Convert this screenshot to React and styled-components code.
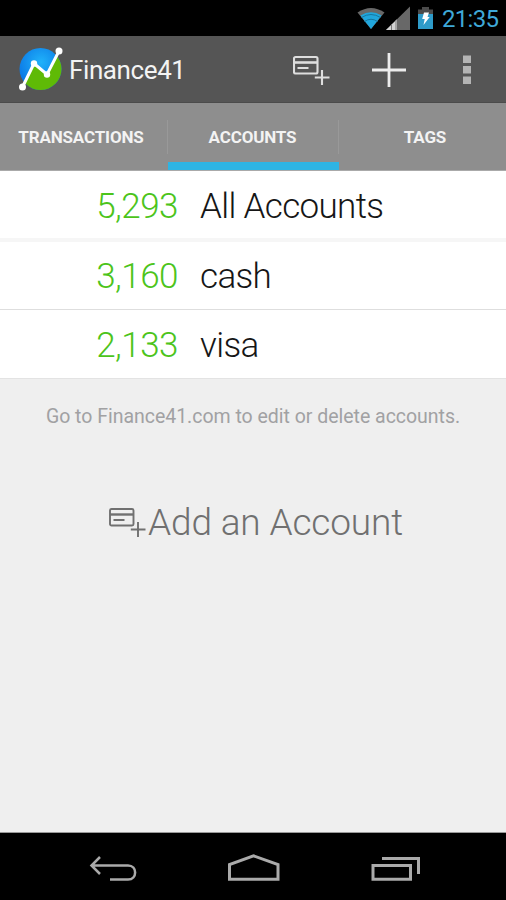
import React from "react";
import styled, { createGlobalStyle } from "styled-components";

const GlobalStyle = createGlobalStyle`
  body { margin: 0; background: #000; }
  * { box-sizing: border-box; }
`;

const Screen = styled.div`
  width: 506px;
  height: 900px;
  display: flex;
  flex-direction: column;
  overflow: hidden;
  background: #efefef;
  font-family: Roboto, "Liberation Sans", sans-serif;
`;

const StatusBar = styled.header`
  height: 36px;
  flex: none;
  display: flex;
  align-items: center;
  justify-content: flex-end;
  padding-right: 8px;
  background: #000;
`;

const StatusIcons = styled.svg`
  width: 78px;
  height: 36px;
  margin-right: 7px;
`;

const Clock = styled.span`
  width: 56px;
  color: #3fa9d8;
  font-size: 24px;
  line-height: 36px;
  letter-spacing: -0.7px;
  white-space: nowrap;
  padding-top: 2px;
`;

const ActionBar = styled.div`
  height: 67px;
  flex: none;
  display: flex;
  align-items: center;
  padding-left: 18px;
  background: #555;
  border-bottom: 1px solid #4b4b4b;
`;

const Logo = styled.svg`
  width: 46px;
  height: 48px;
  margin-right: 5px;
`;

const Title = styled.h1`
  margin: 0;
  flex: 1;
  color: #f3f3f3;
  font-size: 26px;
  font-weight: 400;
  line-height: 32px;
  letter-spacing: -0.4px;
  padding-top: 2px;
`;

const Action = styled.button`
  width: 78px;
  height: 66px;
  padding: ${(p) => p.$pad || "0"};
  border: 0;
  background: none;
  display: flex;
  align-items: center;
  justify-content: center;
`;

const Glyph = styled.svg`
  display: block;
  flex: none;
  width: ${(p) => p.$w}px;
  height: ${(p) => p.$h}px;
  color: ${(p) => p.$color};
  fill: none;
  stroke: currentColor;
`;

const Tabs = styled.nav`
  height: 68px;
  flex: none;
  display: grid;
  grid-template-columns: 168px 171px 167px;
  background: #8e8e8e;
  border-bottom: 1px solid #aaa;
`;

const Tab = styled.div`
  display: flex;
  align-items: center;
  justify-content: center;
  padding: ${(p) => p.$pad || "0"};
  color: #f3f3f3;
  font-size: 17px;
  font-weight: 700;
  letter-spacing: -0.15px;
  background:
    linear-gradient(#2eb4e3, #2eb4e3) 0 100% / 100% ${(p) => (p.$active ? "8px" : "0")} no-repeat,
    linear-gradient(#999, #999) 100% 17px / 1px ${(p) => (p.$divided ? "34px" : "0")} no-repeat;
`;

const Row = styled.div`
  height: ${(p) => p.$height};
  flex: none;
  display: grid;
  grid-template-columns: 178px 1fr;
  column-gap: 22px;
  align-items: center;
  padding-top: ${(p) => p.$drop};
  background: #fff;
  border-bottom: ${(p) => p.$line};
  font-size: 35px;
  font-weight: 300;
  line-height: 40px;
`;

const Amount = styled.span`
  color: #4cc41b;
  text-align: right;
  letter-spacing: -0.5px;
`;

const Name = styled.span`
  color: #161616;
  letter-spacing: -0.65px;
`;

const Hint = styled.p`
  margin: 26px 0 0;
  color: #a1a1a3;
  font-size: 19.5px;
  line-height: 24px;
  text-align: center;
  white-space: nowrap;
  letter-spacing: -0.02px;
`;

const AddAccount = styled.button`
  margin: 70px 0 0;
  padding: 0 0 0 109px;
  border: 0;
  background: none;
  display: flex;
  align-items: center;
  gap: 2px;
  color: #707070;
  font: 300 37px/48px Roboto, sans-serif;
  letter-spacing: -0.15px;
  white-space: nowrap;
`;

const NavBar = styled.footer`
  height: 68px;
  flex: none;
  margin-top: auto;
  display: flex;
  align-items: center;
  justify-content: space-between;
  padding: 5px 85px 0 89px;
  background: #000;
  border-top: 1px solid #999;
`;

const CardPlus = ({ color, weight }) => (
  <Glyph $w={37} $h={32} $color={color} viewBox="0 0 37 32" strokeWidth={weight}>
    <rect x="1" y="2" width="23.5" height="16.5" rx="1.5" />
    <path d="M1 7.500h23.500" strokeWidth={weight + 0.5} />
    <path d="M4.500 13h11M29 15v15M21.800 22.500h14.700" />
  </Glyph>
);

const accounts = [
  { amount: "5,293", name: "All Accounts", height: "71px", line: "4px solid #f6f6f6", drop: "4px" },
  { amount: "3,160", name: "cash", height: "68px", line: "1px solid #dedede", drop: "3px" },
  { amount: "2,133", name: "visa", height: "69px", line: "1px solid #e3e3e3", drop: "4px" },
];

export default function App() {
  return (
    <Screen>
      <GlobalStyle />
      <StatusBar>
        <StatusIcons viewBox="357 0 78 36">
          <path d="M357.5 12.5Q371 3.5 384.5 12.5L371 29Z" fill="#686868" />
          <path d="M360.5 15.5Q371 9 381.5 15.5L371 29Z" fill="#20a6dc" />
          <path d="M361.5 17.5Q371 11.5 380.5 17.5M364.5 21.5Q371 17 377.5 21.5" fill="none" stroke="#1577a0" strokeWidth="1" />
          <path d="M386 30L410 6.500V30Z" fill="#686868" />
          <path d="M386 30L397 19.300V30Z" fill="#d2d2d2" />
          <path d="M391.500 24V30M396 20V30" stroke="#777" strokeWidth="1" />
          <path d="M418 9.500h4V7h7v2.500h4V14h-15Z" fill="#4b4b4b" />
          <path d="M418 14h15v15h-15Z" fill="#2e9bc9" />
          <path d="M424 12.500l5 0-1.500 4.500h2.200l-6.200 8 1.200-6h-2.500Z" fill="#fff" />
        </StatusIcons>
        <Clock>21:35</Clock>
      </StatusBar>
      <ActionBar>
        <Logo viewBox="18 45 46 48">
          <defs>
            <radialGradient id="sky" cx="0.5" cy="0.35" r="0.6">
              <stop offset="0" stopColor="#20b2fa" />
              <stop offset="1" stopColor="#0871e3" />
            </radialGradient>
            <clipPath id="disc"><circle cx="40.500" cy="69" r="21" /></clipPath>
          </defs>
          <g clipPath="url(#disc)">
            <rect x="18" y="46" width="46" height="46" fill="url(#sky)" />
            <path d="M22 87L34 64 47 75 59 51 64 50V92H22Z" fill="#5fba06" />
          </g>
          <path d="M22.500 87L34 63.500 47 74.500 59 51" fill="none" stroke="#fff" strokeWidth="3" />
          <g fill="#fff">
            <circle cx="22.500" cy="87" r="3.500" />
            <circle cx="34" cy="63.500" r="3.200" />
            <circle cx="47" cy="74.500" r="3.200" />
            <circle cx="59" cy="51" r="3.500" />
          </g>
        </Logo>
        <Title>Finance41</Title>
        <Action $pad="4px 0 0" aria-label="Add account"><CardPlus color="#dedede" weight={2.1} /></Action>
        <Action $pad="1px 1px 0 0" aria-label="Add">
          <Glyph $w={34} $h={34} $color="#ececec" viewBox="0 0 34 34" strokeWidth="2.800">
            <path d="M17 0V34M0 17H34" />
          </Glyph>
        </Action>
        <Action $pad="2px 0 0" aria-label="More">
          <Glyph $w={8} $h={30} $color="#b4b4b4" viewBox="0 0 8 30" strokeWidth="8">
            <path d="M4 0.500v7.500M4 11v7.500M4 21.500v7.500" />
          </Glyph>
        </Action>
      </ActionBar>
      <Tabs>
        <Tab $divided $pad="0 6px 0 0">TRANSACTIONS</Tab>
        <Tab $divided $active $pad="0 2px 0 0">ACCOUNTS</Tab>
        <Tab $pad="0 0 0 5px">TAGS</Tab>
      </Tabs>
      {accounts.map((a) => (
        <Row key={a.name} $height={a.height} $line={a.line} $drop={a.drop}>
          <Amount>{a.amount}</Amount>
          <Name>{a.name}</Name>
        </Row>
      ))}
      <Hint>Go to Finance41.com to edit or delete accounts.</Hint>
      <AddAccount>
        <CardPlus color="#707070" weight={1.9} />
        <span>Add an Account</span>
      </AddAccount>
      <NavBar>
        <Glyph $w={48} $h={28} $color="#aaa" viewBox="89 855 48 28" strokeWidth="2.500">
          <path d="M100 857L91.500 865.500 100 874M91.500 865.500H128C137.500 865.500 137.500 879.500 128 879.500H110" />
        </Glyph>
        <Glyph $w={54} $h={30} $color="#aaa" viewBox="227 854 54 30" strokeWidth="3">
          <path d="M229.500 879.300V864.500L253.500 855.800 278 864.500V879.300Z" />
        </Glyph>
        <Glyph $w={50} $h={28} $color="#aaa" viewBox="371 855 50 28" strokeWidth="3">
          <path d="M373 865.500H410.500V879.300H373ZM382 858.500H418.500V874" />
        </Glyph>
      </NavBar>
    </Screen>
  );
}
